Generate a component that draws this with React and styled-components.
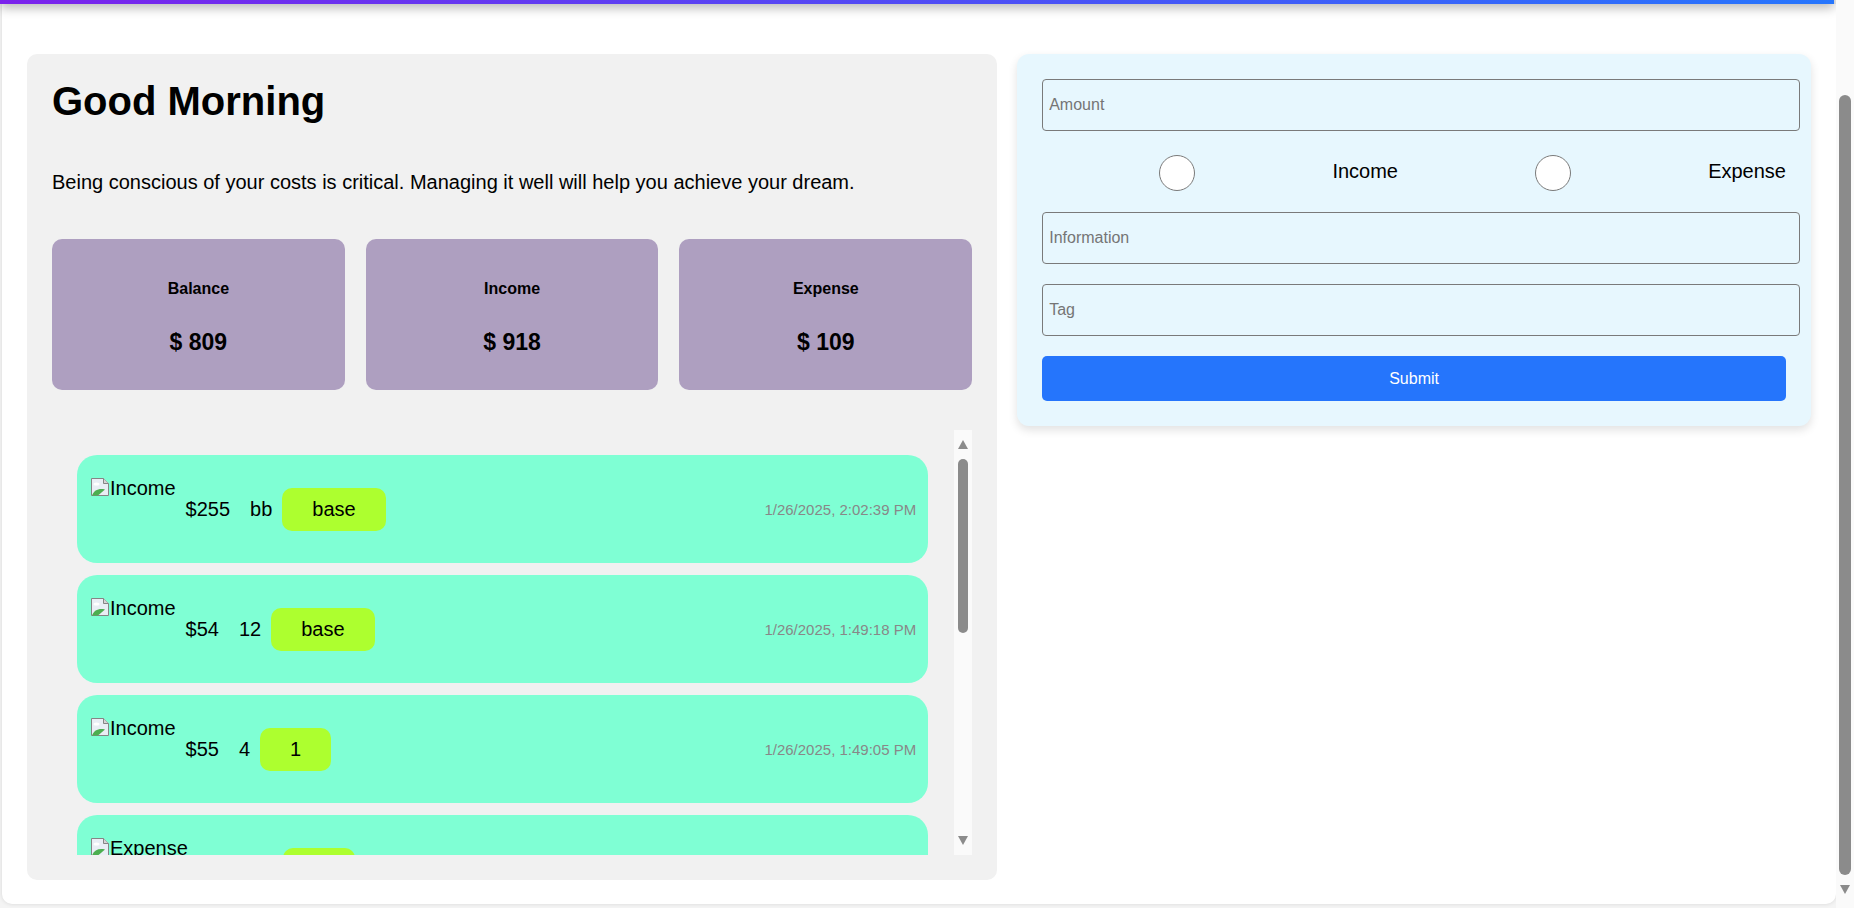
import React, { useLayoutEffect } from 'react';
import styled, { createGlobalStyle } from 'styled-components';

const GlobalStyle = createGlobalStyle`
    body {
        margin: 0;
        background: #f4f4f4;
        font-family: "Liberation Sans", Arial, sans-serif;
        color: #000;
    }
`;

const Page = styled.div`
    padding: 0 18px 19px 2px;
`;

const NavBar = styled.div`
    height: 96px;
    margin-left: -2px;
    margin-right: 2px;
    background: linear-gradient(to right, #7b22ec, #2676fd);
    box-shadow: 0 4px 10px rgba(0, 0, 0, 0.28);
    position: relative;
    z-index: 1;
`;

const Card = styled.div`
    background: #fff;
    border-radius: 0 0 10px 10px;
    box-shadow: 0 0 4px rgba(0, 0, 0, 0.12);
    padding: 50px 25px 24px;
    display: grid;
    grid-template-columns: 55fr 45fr;
    gap: 20px;
    align-items: start;
`;

/* scrollbars are drawn by hand so the shot keeps them */
const PageTrack = styled.div`
    position: fixed;
    top: 0;
    right: 0;
    bottom: 0;
    width: 18px;
    background: #fafafa;
    display: flex;
    flex-direction: column;
    align-items: center;
    padding: 95px 0 14px;
    box-sizing: border-box;
    z-index: 2;
`;

const Track = styled.div`
    width: 18px;
    flex-shrink: 0;
    background: #fafafa;
    display: flex;
    flex-direction: column;
    align-items: center;
    padding: 10px 0;
    box-sizing: border-box;
`;

const Thumb = styled.div`
    width: ${(p) => p.$w}px;
    height: ${(p) => p.$h}px;
    margin-top: ${(p) => p.$top || 0}px;
    border-radius: ${(p) => p.$w / 2}px;
    background: #8b8b8b;
    flex-shrink: 0;
`;

const Spacer = styled.div`
    flex: 1;
`;

const Arrow = styled.div`
    width: 0;
    height: 0;
    border-left: 5px solid transparent;
    border-right: 5px solid transparent;
    ${(p) => p.$up
        ? 'border-bottom: 9px solid #8b8b8b;'
        : 'border-top: 9px solid #8b8b8b;'}
`;

const LeftPanel = styled.div`
    background: #f1f1f1;
    border-radius: 10px;
    padding: 25px;
    display: flex;
    flex-direction: column;
`;

const Title = styled.h1`
    margin: 0 0 47px;
    font-size: 40px;
    font-weight: 700;
`;

const Intro = styled.p`
    margin: 0 0 45px;
    font-size: 20px;
`;

const StatRow = styled.div`
    display: grid;
    grid-template-columns: repeat(3, 1fr);
    gap: 21px;
    margin-bottom: 40px;
`;

const StatCard = styled.div`
    background: #ae9fc0;
    border-radius: 10px;
    height: 151px;
    box-sizing: border-box;
    padding-top: 41px;
    display: flex;
    flex-direction: column;
    align-items: center;
    gap: 31px;
`;

const StatLabel = styled.div`
    font-size: 16px;
    font-weight: 700;
`;

const StatValue = styled.div`
    font-size: 23px;
    font-weight: 700;
`;

const ListFrame = styled.div`
    display: flex;
    height: 425px;
`;

const List = styled.div`
    flex: 1;
    overflow-y: auto;
    scrollbar-width: none;
    padding: 25px 26px 25px 25px;
    display: flex;
    flex-direction: column;
    gap: 12px;
`;

const Item = styled.div`
    flex-shrink: 0;
    min-height: 108px;
    box-sizing: border-box;
    background: #7fffd4;
    border-radius: 20px;
    padding: 0 12px 0 13px;
    display: flex;
    align-items: center;
    font-size: 20px;
`;

const ImgBox = styled.div`
    height: 64px;
    display: flex;
    align-items: flex-start;
    line-height: 22px;
`;

const Amount = styled.span`
    margin: 0 10px;
`;

const Tag = styled.span`
    background: #adff2f;
    border-radius: 10px;
    padding: 10px 30px;
    line-height: 23px;
`;

const Time = styled.span`
    margin-left: auto;
    font-size: 15px;
    color: #888;
`;

const FormPanel = styled.form`
    background: #e7f7fe;
    border-radius: 12px;
    box-shadow: 0 4px 10px rgba(0, 0, 0, 0.12);
    padding: 25px;
    display: flex;
    flex-direction: column;
    gap: 20px;
`;

const Field = styled.input`
    width: calc(100% + 14px);
    height: 52px;
    box-sizing: border-box;
    padding: 0 6px;
    border: 1px solid #7a7a7a;
    border-radius: 4px;
    background: transparent;
    font-family: inherit;
    font-size: 16px;
    &::placeholder {
        color: #757575;
    }
`;

const RadioRow = styled.div`
    display: flex;
    align-items: center;
    gap: 20px;
    height: 41px;
`;

const RadioSlot = styled.div`
    flex: 1;
    display: flex;
    justify-content: center;
`;

const Radio = styled.input`
    appearance: none;
    margin: 3px 0 0;
    width: 36px;
    height: 36px;
    border-radius: 50%;
    border: 1px solid #7a7a7a;
    background: #fff;
`;

const RadioLabel = styled.label`
    font-size: 20px;
`;

const Submit = styled.button`
    height: 45px;
    border: none;
    border-radius: 5px;
    background: #2575fc;
    color: #fff;
    font-family: inherit;
    font-size: 16px;
`;

const BrokenImage = () => (
    <svg width="20" height="20" viewBox="0 0 20 20">
        <path d="M1.5 1.5h12l5 5v12h-17z" fill="#e9eef5" stroke="#858585"/>
        <path d="M13.5 1.5v5h5" fill="#d4d4d4" stroke="#858585"/>
        <ellipse cx="6.5" cy="7" rx="3" ry="1.6" fill="#fff"/>
        <path d="M2 18.5C4 13 9 11 15 12.5L8 18.5z" fill="#4caf50"/>
    </svg>
);

const stats = [
    {label: 'Balance', value: 809},
    {label: 'Income', value: 918},
    {label: 'Expense', value: 109},
];

const records = [
    {type: 'Income', amount: 255, info: 'bb', tag: 'base', time: '1/26/2025, 2:02:39 PM'},
    {type: 'Income', amount: 54, info: '12', tag: 'base', time: '1/26/2025, 1:49:18 PM'},
    {type: 'Income', amount: 55, info: '4', tag: '1', time: '1/26/2025, 1:49:05 PM'},
    {type: 'Expense', amount: 100, info: 'a', tag: '1', time: '1/26/2025, 1:48:51 PM'},
    {type: 'Income', amount: 500, info: 'pay', tag: 'base', time: '1/26/2025, 1:47:30 PM'},
    {type: 'Expense', amount: 9, info: 'tea', tag: 'food', time: '1/26/2025, 1:46:12 PM'},
    {type: 'Income', amount: 54, info: 'aa', tag: 'base', time: '1/26/2025, 1:45:02 PM'},
    {type: 'Income', amount: 0, info: 'x', tag: '1', time: '1/26/2025, 1:44:40 PM'},
];

export default function App() {
    // the page in the shot is scrolled past most of the nav bar
    useLayoutEffect(() => {
        window.scrollTo(0, 92);
    }, []);

    return (
        <Page>
            <GlobalStyle/>
            <NavBar/>
            <Card>
                <LeftPanel>
                    <Title>Good Morning</Title>
                    <Intro>Being conscious of your costs is critical. Managing it well will help you achieve your dream.</Intro>
                    <StatRow>
                        {stats.map((s) => (
                            <StatCard key={s.label}>
                                <StatLabel>{s.label}</StatLabel>
                                <StatValue>$ {s.value}</StatValue>
                            </StatCard>
                        ))}
                    </StatRow>
                    <ListFrame>
                        <List>
                            {records.map((r, index) => (
                                <Item key={index}>
                                    <ImgBox>
                                        <BrokenImage/>
                                        <span>{r.type}</span>
                                    </ImgBox>
                                    <Amount>${r.amount}</Amount>
                                    <Amount>{r.info}</Amount>
                                    <Tag>{r.tag}</Tag>
                                    <Time>{r.time}</Time>
                                </Item>
                            ))}
                        </List>
                        <Track>
                            <Arrow $up/>
                            <Thumb $w={10} $h={174} $top={10}/>
                            <Spacer/>
                            <Arrow/>
                        </Track>
                    </ListFrame>
                </LeftPanel>
                <FormPanel onSubmit={(e) => e.preventDefault()}>
                    <Field placeholder="Amount"/>
                    <RadioRow>
                        <RadioSlot><Radio type="radio" name="kind" id="r-income"/></RadioSlot>
                        <RadioLabel htmlFor="r-income">Income</RadioLabel>
                        <RadioSlot><Radio type="radio" name="kind" id="r-expense"/></RadioSlot>
                        <RadioLabel htmlFor="r-expense">Expense</RadioLabel>
                    </RadioRow>
                    <Field placeholder="Information"/>
                    <Field placeholder="Tag"/>
                    <Submit type="submit">Submit</Submit>
                </FormPanel>
            </Card>
            <PageTrack>
                <Thumb $w={12} $h={780}/>
                <Spacer/>
                <Arrow/>
            </PageTrack>
        </Page>
    );
}
